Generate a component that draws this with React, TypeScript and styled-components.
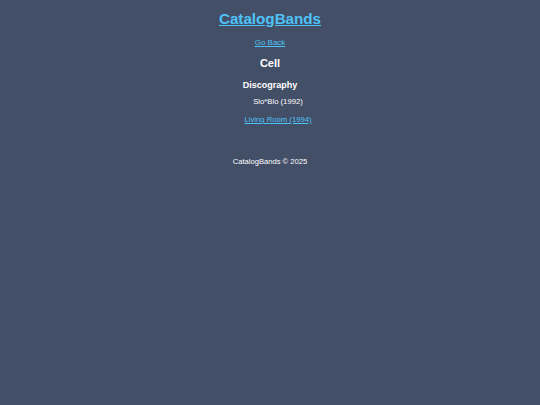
import styled, { createGlobalStyle } from "styled-components";

const Global = createGlobalStyle`
  html, body {
    margin: 0;
    padding: 0;
    background: #434e67;
  }
  body {
    font-family: "Liberation Sans", Arial, sans-serif;
    color: #ffffff;
  }
`;

const S = {
  Page: styled.div`
    min-height: 405px;
    display: flex;
    flex-direction: column;
    align-items: center;
    text-align: center;
    padding-top: 9px;
    box-sizing: border-box;
  `,
  Brand: styled.a`
    color: #4fc3f7;
    font-size: 15.2px;
    font-weight: bold;
    text-decoration: underline;
    line-height: 20px;
  `,
  Back: styled.a`
    color: #4fc3f7;
    font-size: 8px;
    margin-top: 9px;
    line-height: 10px;
  `,
  Band: styled.h2`
    font-size: 11px;
    font-weight: bold;
    margin: 8px 0 0;
    line-height: 14px;
  `,
  Heading: styled.h3`
    font-size: 9px;
    font-weight: bold;
    margin: 10px 0 0;
    line-height: 11px;
  `,
  List: styled.ul`
    list-style: none;
    margin: 6px 0 0;
    padding: 0 0 0 16px;
    display: flex;
    flex-direction: column;
    gap: 8px;
  `,
  Item: styled.li<{ $link?: boolean }>`
    font-size: 7.7px;
    line-height: 10px;
    color: ${(p) => (p.$link ? "#4fc3f7" : "#ffffff")};
    text-decoration: ${(p) => (p.$link ? "underline" : "none")};
  `,
  Footer: styled.footer`
    font-size: 7.6px;
    line-height: 10px;
    margin-top: 32px;
  `,
};

const albums = [
  { title: "Slo*Blo (1992)", link: false },
  { title: "Living Room (1994)", link: true },
];

export default function App() {
  return (
    <>
      <Global />
      <S.Page>
        <S.Brand href="#">CatalogBands</S.Brand>
        <S.Back href="#">Go Back</S.Back>
        <S.Band>Cell</S.Band>
        <S.Heading>Discography</S.Heading>
        <S.List>
          {albums.map((a) => (
            <S.Item key={a.title} $link={a.link}>
              {a.title}
            </S.Item>
          ))}
        </S.List>
        <S.Footer>CatalogBands © 2025</S.Footer>
      </S.Page>
    </>
  );
}
